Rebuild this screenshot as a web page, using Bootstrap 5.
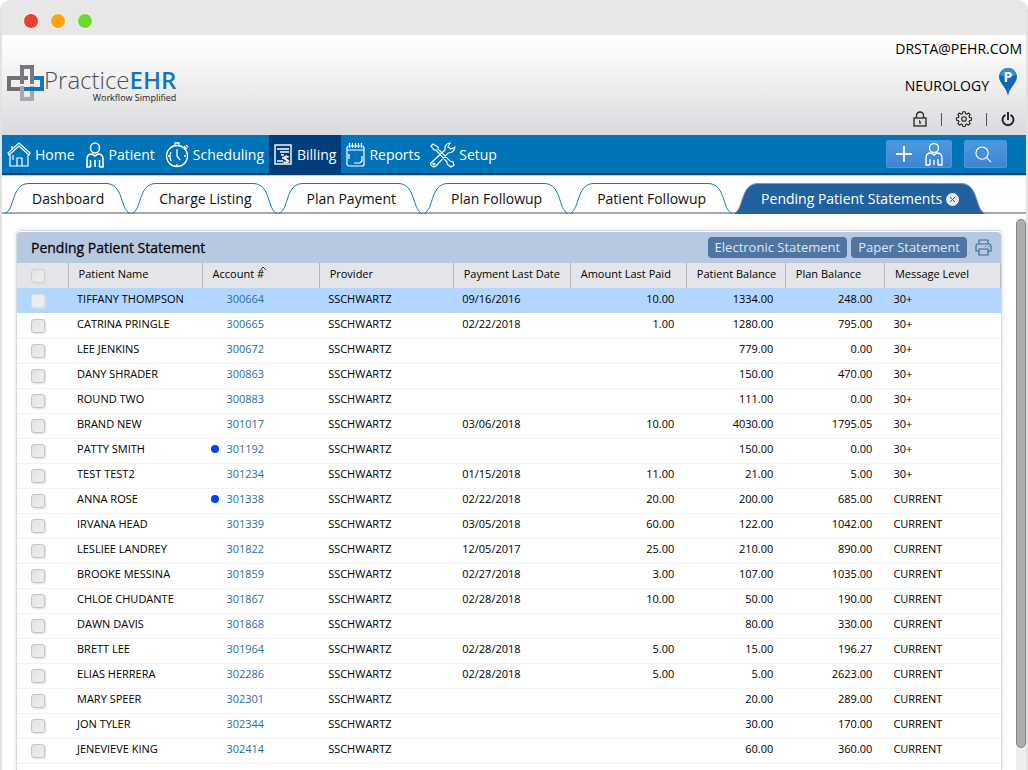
<!DOCTYPE html>
<html lang="en">
<head>
<meta charset="utf-8">
<meta name="viewport" content="width=device-width, initial-scale=1">
<title>Practice EHR - Pending Patient Statements</title>
<link href="https://cdn.jsdelivr.net/npm/bootstrap@5.3.0/dist/css/bootstrap.min.css" rel="stylesheet">
<style>
body{font-family:"Open Sans","Noto Sans",sans-serif;font-size:14px;line-height:20px;color:#000;background:#fff}
svg{display:block;flex:none;overflow:visible}
.frame{border:solid #e2e2e2;border-width:0 2px 0 2px;border-radius:10px 10px 0 0}
.titlebar{height:35px;background:#e7e7e7;padding:13px 21px 0;gap:11px}
.light{width:16px;height:16px;border-radius:50%;border:1px solid #f8f6ee}
.masthead{height:100px;background:linear-gradient(#fff,#fafafa 20%,#d9dadd);padding:4px 4px 0 4px}
.logo{color:#58595b;text-decoration:none;margin-top:25px}
.word{font-size:24px;line-height:28px;font-weight:300;color:#4d4e50;margin-top:2px}
.word b{font-weight:600;color:#1475bb}
.tagline{font-size:9px;line-height:8px;color:#222}
.account{font-size:14px}
.practice{gap:10px;padding-right:5px;margin-top:9px}
.tools{gap:14px;padding-right:7px;margin-top:15px}
.tool{border:0;background:none;padding:0;color:#222}
.divider{width:1px;height:13px;background:#555}
.mainnav{height:40px;background:#0173b9;border-bottom:2px solid #06406f;box-shadow:0 1px 1px #ccc;padding-right:19px}
.mainnav .nav-link{color:#fff;padding:2px 5px 0;gap:4px;font-weight:400}
.mainnav .nav-link.active{background:#023d7b}
.action{height:28px;border:1px solid #4c97dc;border-radius:2px;background:linear-gradient(#4a9ae0,#3f83d2);color:#fff;padding:0}
.tabs{height:39px;padding:8px 0 0 2px;border-bottom:2px solid #a8a8a8}
.tabs .tab{color:#111;margin-bottom:-2px;height:31px}
.tab-mid{border-top:1px solid #1777ad;padding:5px 2px 0 3px}
.tab.active{color:#fff}
.tab.active .tab-mid{background:#2161a0;border-color:#8795a5;gap:4px}
.closer{width:13px;height:13px;border:0;border-radius:50%;background:#e9e9e9;padding:0;margin-top:4px}
.content{padding:16px 14px 0 14px}
.panel{border:1px solid #d5dbe3;border-bottom:0;border-radius:5px 5px 0 0;box-shadow:0 0 4px #ddd}
.panel-top{height:32px;background:#b7c9e1;border-top:1px solid #fff;border-radius:4px 4px 0 0;padding:0 9px 0 14px}
.panel-top h1{font-size:14px;line-height:20px;font-weight:400;-webkit-text-stroke:.3px #111}
.panel-top .btn{font-size:13px;line-height:19px;padding:1px 7px;border:0;border-radius:4px;background:#5175a2;color:#dce7f6}
.grid{table-layout:fixed;width:100%;font-size:11px;line-height:14px}
.grid th{height:25px;font-weight:400;background:#e4e5e9;border-right:1px solid #b4b5ba;padding:0 0 4px 10px;white-space:nowrap}
.grid th:first-child,.grid td:first-child{padding:0 0 0 14px}
.grid td{height:25px;border-bottom:1px solid #f3f3f3;padding:0 0 3px 9px;white-space:nowrap}
.grid tr.picked td{background:#b3d6fe;border-color:#fff}
.grid td.amount{text-align:right;padding-right:12px}
.grid a{color:#2e6da4;text-decoration:none}
.number{padding-right:55px}
.pick{appearance:none;display:block;width:14px;height:14px;margin:1px 0 0;border:1px solid #c4c4c4;border-radius:3px;background:linear-gradient(135deg,#e2e2e2,#efefef);box-shadow:1px 1px 2px #ddd}
th .pick{border-color:#d0d0d3;margin:0}
.picked .pick{border-color:#ddd;background:#ececec}
.flag{width:8px;height:8px;border-radius:50%;background:#0a3cf0;margin-right:7px}
.sorted{margin-left:-4px}
.rail{width:10px;margin-top:5px;background:#eee}
.thumb{height:96%;background:#adadad;border:1px solid #858585;border-radius:5px}
</style>
</head>
<body>
<div class="frame vh-100 d-flex flex-column overflow-hidden">
  <div class="titlebar d-flex flex-shrink-0">
    <span class="light" style="background:#ea412f"></span>
    <span class="light" style="background:#ffa313"></span>
    <span class="light" style="background:#6dd92b"></span>
  </div>

  <header class="masthead d-flex justify-content-between flex-shrink-0">
    <a href="#" class="logo d-flex align-items-start">
      <svg width="38" height="38" viewBox="0 0 38 38" fill="none" stroke-width="4">
        <path d="M16 22V35H26V22" stroke="#a7a9ac"/>
        <path d="M14 25H3V14H22" stroke="#6f7073"/>
        <path d="M26 18V3H16V20" stroke="#77797c"/>
        <path d="M26 14H36V25H18" stroke="#1475bb"/>
        <path d="M26 10V20" stroke="#77797c"/>
      </svg>
      <span class="d-flex flex-column align-items-end"><span class="word">Practice<b>EHR</b></span><span class="tagline">Workflow Simplified</span></span>
    </a>
    <div class="account d-flex flex-column align-items-end">
      <span>DRSTA@PEHR.COM</span>
      <span class="practice d-flex align-items-end">NEUROLOGY
        <svg width="18" height="28" viewBox="0 0 18 28"><path d="M9 28C8 20 0 15 0 8.500A9 8.500 0 0118 8.500C18 15 10 20 9 28Z" fill="#1267b4"/><path d="M1 7A8 7 0 0117 7Q9 10 1 7Z" fill="#3d8fd3"/><text x="9" y="14" font-size="14" font-weight="700" text-anchor="middle" fill="#fff">P</text></svg>
      </span>
      <span class="tools d-flex align-items-center">
        <button class="tool" aria-label="Lock"><svg width="14" height="16" viewBox="0 0 14 16" fill="none" stroke="currentColor" stroke-width="1.300"><rect x="1" y="7" width="12" height="8"/><path d="M3.500 7V4.500a3.500 3.500 0 017 0V7M7 10v3M6 10h1"/></svg></button>
        <span class="divider"></span>
        <button class="tool" aria-label="Settings"><svg width="16" height="16" viewBox="0 0 16 16" fill="none" stroke="currentColor" stroke-width="1.100" stroke-linejoin="round"><path d="M6.800 .7h2.400l.4 2 1.200.5 1.700-1.200 1.700 1.700L13 5.300l.5 1.200 2 .4v2.300l-2 .4-.5 1.200 1.200 1.700-1.700 1.700-1.700-1.200-1.200.5-.4 2H6.800l-.4-2-1.200-.5-1.700 1.200-1.700-1.700L3 10.800l-.5-1.200-2-.4V6.900l2-.4L3 5.300 1.800 3.700 3.500 2l1.700 1.200 1.200-.5z"/><circle cx="8" cy="8" r="2.300"/></svg></button>
        <span class="divider"></span>
        <button class="tool" aria-label="Sign out"><svg width="14" height="15" viewBox="0 0 14 15" fill="none" stroke="currentColor" stroke-width="1.900"><path d="M4.500 2.800a5.500 5.500 0 105 0M7 0v8"/></svg></button>
      </span>
    </div>
  </header>

  <nav class="mainnav d-flex align-items-center justify-content-between flex-shrink-0">
    <div class="nav h-100 flex-nowrap">
      <a class="nav-link d-flex align-items-center" href="#"><svg width="24" height="26" viewBox="0 0 24 26" fill="none" stroke="currentColor" stroke-width="1.200"><path d="M1 11 12 1 23 11 22 13 12 4 2 13ZM3 13V24H21V13M10 24V16H15V24M5 4V7M6 13V18"/></svg>Home</a>
      <a class="nav-link d-flex align-items-center" href="#"><svg width="20" height="26" viewBox="0 0 20 26" fill="none" stroke="currentColor" stroke-width="1.600"><ellipse cx="10" cy="6" rx="4.500" ry="5"/><path d="M5.500 25H2V17Q2 12 7 12L10 14 13 12Q18 12 18 17V25H14.500M5.500 18V25M14.500 18V25M10 18V25"/></svg>Patient</a>
      <a class="nav-link d-flex align-items-center" href="#"><svg width="24" height="26" viewBox="-1 0 24 26" fill="none" stroke="currentColor" stroke-width="1.300"><circle cx="11" cy="14" r="10.500"/><path d="M9 3V1H13V3M18 4 21 7M20 3 22 5M11 7V14L14 18M2 14H4M18 14H20M11 22V24M5 19Q3 14 5 10"/></svg>Scheduling</a>
      <a class="nav-link active d-flex align-items-center" href="#"><svg width="19" height="22" viewBox="0 0 19 22" fill="none" stroke="currentColor" stroke-width="1.400"><rect x="1" y="1" width="16" height="19"/><path d="M3 5H15M6 8H15M7 11H10M8 14H10M3 17H9"/><text x="9" y="19" font-size="11" font-weight="700" fill="#fff" stroke="none">$</text></svg>Billing</a>
      <a class="nav-link d-flex align-items-center" href="#"><svg width="19" height="25" viewBox="0 0 19 25" fill="none" stroke="currentColor" stroke-width="1.200"><rect x="1" y="3" width="17" height="20" rx="2"/><path d="M3.500 0V5M6.500 0V5M9.500 0V5M12.500 0V5M15.500 0V5M1 7H18M16 13V18L14 20H8M3 11V16"/></svg>Reports</a>
      <a class="nav-link d-flex align-items-center" href="#"><svg width="25" height="26" viewBox="0 0 25 26" fill="none" stroke="currentColor" stroke-width="1.200"><path d="M1 4 3 2 8 5V7L20 19 23 20 24 23 21 25 17 22V20L6 8H4ZM2 20 15 8Q14 2 20 1L18 5 21 7 25 5Q24 11 18 11L6 24Q3 26 1 23 0 21 2 20Z"/><circle cx="4" cy="22" r="1"/></svg>Setup</a>
    </div>
    <div class="d-flex" style="gap:12px">
      <button class="action d-flex align-items-center justify-content-center gap-2" style="width:66px" aria-label="Add patient"><svg width="18" height="18" viewBox="0 0 18 18" stroke="#fff" stroke-width="1.800"><path d="M1 9H17M9 1V17"/></svg><svg class="ms-1" width="18" height="22" viewBox="0 0 18 22" fill="none" stroke="#fff" stroke-width="1.300"><circle cx="9" cy="5" r="4.500"/><path d="M5 22H1V15Q1 10 6 10L9 12 12 10Q17 10 17 15V22H13M5 16V22M13 16V22M9 17V22"/></svg></button>
      <button class="action d-flex align-items-center justify-content-center" style="width:43px" aria-label="Search"><svg class="me-1" width="17" height="17" viewBox="0 0 18 18" fill="none" stroke="#fff" stroke-width="1.200"><circle cx="7.500" cy="7.500" r="6.500"/><path d="M12 12 17 17"/></svg></button>
    </div>
  </nav>

  <div class="tabs d-flex flex-shrink-0" id="tabs"></div>

  <div class="d-flex flex-fill overflow-hidden">
    <main class="content flex-fill">
      <section class="panel h-100 w-100">
        <div class="panel-top d-flex align-items-center justify-content-between">
          <h1 class="m-0">Pending Patient Statement</h1>
          <div class="d-flex align-items-center gap-1">
            <button class="btn">Electronic Statement</button>
            <button class="btn">Paper Statement</button>
            <button class="tool ms-1" aria-label="Print"><svg width="17" height="17" viewBox="0 0 17 17" fill="none" stroke="#2f6ca8" stroke-width="1.200"><path d="M4 5V1H13V5M4 12H1V7Q1 5 3 5H14Q16 5 16 7V12H13M4 10H13V16H4ZM10 7.500H11M13 7.500H14"/></svg></button>
          </div>
        </div>
        <table class="grid">
          <colgroup><col style="width:51px"><col style="width:134px"><col style="width:117px"><col style="width:134px"><col style="width:117px"><col style="width:116px"><col style="width:99px"><col style="width:99px"><col style="width:116px"></colgroup>
          <thead><tr>
            <th><input type="checkbox" class="pick" aria-label="Select all"></th>
            <th>Patient Name</th>
            <th><span class="d-inline-flex">Account #<svg class="sorted" width="6" height="4" viewBox="0 0 6 4" fill="none" stroke="#333"><path d="M0 4 3 0 6 3"/></svg></span></th>
            <th>Provider</th><th>Payment Last Date</th><th>Amount Last Paid</th><th>Patient Balance</th><th>Plan Balance</th><th>Message Level</th>
          </tr></thead>
          <tbody id="rows"></tbody>
        </table>
      </section>
    </main>
    <div class="rail flex-shrink-0"><div class="thumb"></div></div>
  </div>
</div>

<script src="https://cdn.jsdelivr.net/npm/bootstrap@5.3.0/dist/js/bootstrap.bundle.min.js"></script>
<script>
// Each tab is a left slope, a label and a right slope.
const tabs = ['Dashboard', 'Charge Listing', 'Plan Payment', 'Plan Followup', 'Patient Followup', 'Pending Patient Statements'];
const slope = (curve, foot, on) => `<svg width="25" height="31" viewBox="0 0 25 31" fill="none">
  <path d="${curve}V31H${foot}Z" fill="${on ? '#2161a0' : 'none'}"/><path d="${curve}" stroke="${on ? '#8795a5' : '#1777ad'}"/></svg>`;
document.getElementById('tabs').innerHTML = tabs.map((name, i) => {
  const on = i === tabs.length - 1;
  const close = on ? '<button class="closer" aria-label="Close tab"><svg class="mx-auto" width="5" height="5" viewBox="0 0 5 5" stroke="#555"><path d="M0 0 5 5M5 0 0 5"/></svg></button>' : '';
  return `<div class="tab d-flex${on ? ' active' : ''}">${slope('M1 30.500C11 27 7 .5 25 .5', 1, on)}
    <div class="tab-mid d-flex align-items-start"><a href="#" class="text-reset text-decoration-none">${name}</a>${close}</div>
    ${slope('M24 30.500C14 27 18 .5 0 .5', 24, on)}</div>`;
}).join('');

const rows = [
  ['TIFFANY THOMPSON', '300664', '09/16/2016', '10.00', '1334.00', '248.00', '30+'],
  ['CATRINA PRINGLE', '300665', '02/22/2018', '1.00', '1280.00', '795.00', '30+'],
  ['LEE JENKINS', '300672', '', '', '779.00', '0.00', '30+'],
  ['DANY SHRADER', '300863', '', '', '150.00', '470.00', '30+'],
  ['ROUND TWO', '300883', '', '', '111.00', '0.00', '30+'],
  ['BRAND NEW', '301017', '03/06/2018', '10.00', '4030.00', '1795.05', '30+'],
  ['PATTY SMITH', '301192', '', '', '150.00', '0.00', '30+', true],
  ['TEST TEST2', '301234', '01/15/2018', '11.00', '21.00', '5.00', '30+'],
  ['ANNA ROSE', '301338', '02/22/2018', '20.00', '200.00', '685.00', 'CURRENT', true],
  ['IRVANA HEAD', '301339', '03/05/2018', '60.00', '122.00', '1042.00', 'CURRENT'],
  ['LESLIEE LANDREY', '301822', '12/05/2017', '25.00', '210.00', '890.00', 'CURRENT'],
  ['BROOKE MESSINA', '301859', '02/27/2018', '3.00', '107.00', '1035.00', 'CURRENT'],
  ['CHLOE CHUDANTE', '301867', '02/28/2018', '10.00', '50.00', '190.00', 'CURRENT'],
  ['DAWN DAVIS', '301868', '', '', '80.00', '330.00', 'CURRENT'],
  ['BRETT LEE', '301964', '02/28/2018', '5.00', '15.00', '196.27', 'CURRENT'],
  ['ELIAS HERRERA', '302286', '02/28/2018', '5.00', '5.00', '2623.00', 'CURRENT'],
  ['MARY SPEER', '302301', '', '', '20.00', '289.00', 'CURRENT'],
  ['JON TYLER', '302344', '', '', '30.00', '170.00', 'CURRENT'],
  ['JENEVIEVE KING', '302414', '', '', '60.00', '360.00', 'CURRENT']
];
document.getElementById('rows').innerHTML = rows.map(([name, id, date, paid, patient, plan, level, flagged], i) => `
  <tr${i ? '' : ' class="picked"'}>
    <td><input type="checkbox" class="pick" aria-label="Select ${name}"></td>
    <td>${name}</td>
    <td><span class="number d-flex align-items-center justify-content-end">${flagged ? '<span class="flag"></span>' : ''}<a href="#">${id}</a></span></td>
    <td>SSCHWARTZ</td><td>${date}</td><td class="amount">${paid}</td>
    <td class="amount">${patient}</td><td class="amount">${plan}</td><td>${level}</td>
  </tr>`).join('');
</script>
</body>
</html>
